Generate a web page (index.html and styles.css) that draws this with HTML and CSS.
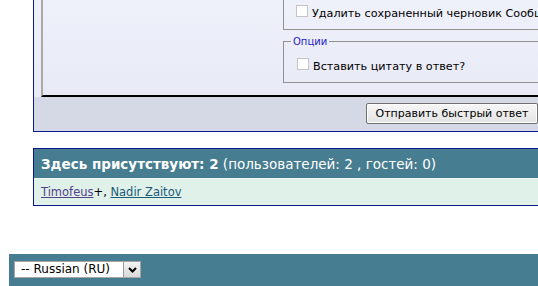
FILE: index.html
```html
<!DOCTYPE html>
<html lang="ru">
<head>
    <meta charset="UTF-8">
    <title>Быстрый ответ</title>
    <link rel="stylesheet" href="styles.css">
</head>
<body>
    <div class="quickreply">
        <div class="qr-main">
            <div class="qr-inner">
                <div class="qr-options">
                    <div class="opt-box opt-cut">
                        <label class="opt-row"><input type="checkbox" class="chk"> Удалить сохраненный черновик Сообщения</label>
                    </div>
                    <fieldset class="opt-box">
                        <legend>Опции</legend>
                        <label class="opt-row"><input type="checkbox" class="chk"> Вставить цитату в ответ?</label>
                    </fieldset>
                </div>
            </div>
        </div>
        <div class="qr-foot">
            <button class="btn">Отправить быстрый ответ</button>
        </div>
    </div>

    <div class="online">
        <div class="online-head">
            <b>Здесь присутствуют: 2</b> (пользователей: 2 , гостей: 0)
        </div>
        <div class="online-body">
            <a href="#" class="visited">Timofeus</a>+, <a href="#">Nadir Zaitov</a>
        </div>
    </div>

    <div class="footbar">
        <div class="lang-select">
            <span class="lang-value">-- Russian (RU)</span>
            <span class="lang-arrow">
                <svg width="9" height="6" viewBox="0 0 9 6"><path d="M1 1 L4.5 4.5 L8 1" fill="none" stroke="#000" stroke-width="2"/></svg>
            </span>
        </div>
    </div>
</body>
</html>
```

FILE: styles.css
```css
html, body {
    overflow: hidden;
}

body {
    margin: 0;
    background: #ffffff;
    font-family: "DejaVu Sans", Verdana, sans-serif;
    font-size: 11px;
    color: #000;
}

.quickreply {
    margin-left: 33px;
    width: 510px;
    border: 1px solid #0b198c;
    border-top: none;
}

.qr-main {
    height: 97px;
    padding-left: 7px;
    background: linear-gradient(#eef0fa, #e8eaf6);
    overflow: hidden;
}

.qr-inner {
    height: 95px;
    border-left: 2px solid #a9a9a9;
    border-bottom: 2px solid #000;
}

.qr-options {
    margin-left: 240px;
    width: 300px;
}

.opt-box {
    border: 1px solid #919191;
    margin: 0;
    padding: 0 0 0 12px;
}

.opt-cut {
    border-top: none;
    height: 29px;
}

fieldset.opt-box {
    margin-top: 5px;
    height: 36px;
    padding-top: 10px;
    padding-left: 13px;
}

legend {
    color: #2424c4;
    font-size: 10px;
    padding: 0 2px;
    margin-left: -6px;
    line-height: 13px;
}

.opt-row {
    display: flex;
    align-items: baseline;
    gap: 4px;
    white-space: nowrap;
    padding-top: 5px;
    font-size: 11.2px;
}

fieldset .opt-row {
    padding-top: 0;
}

.chk {
    appearance: none;
    margin: 0 0 1px 0;
    width: 12px;
    height: 12px;
    border: 1px solid #c4c4c4;
    background: #fff;
}

.qr-foot {
    height: 34px;
    padding: 6px 6px 0 0;
    box-sizing: border-box;
    background: #d5d8e5;
    display: flex;
    justify-content: flex-end;
    align-items: flex-start;
}

.btn {
    width: 172px;
    height: 21px;
    padding: 0;
    font-family: "DejaVu Sans", Verdana, sans-serif;
    font-size: 11px;
    color: #000;
    background: linear-gradient(#f7f7f7, #e3e3e3);
    border: 1px solid #707070;
    border-radius: 2px;
    box-shadow: inset 0 0 0 1px #fff;
}

.online {
    margin: 16px 0 0 33px;
    width: 520px;
    border: 1px solid #0b198c;
}

.online-head {
    height: 29px;
    padding-left: 7px;
    line-height: 31px;
    background: #477d90;
    color: #fff;
    font-size: 13.5px;
    border-bottom: 1px solid #eef6f2;
    white-space: nowrap;
}

.online-body {
    height: 26px;
    padding-left: 7px;
    line-height: 27px;
    font-size: 11.5px;
    background: #e0f1ea;
    white-space: nowrap;
}

.online-body a {
    color: #1a5a78;
}

.online-body a.visited {
    color: #52428a;
}

.footbar {
    margin: 48px 0 0 9px;
    height: 40px;
    background: #477d90;
    padding: 7px 0 0 5px;
    box-sizing: border-box;
}

.lang-select {
    display: flex;
    width: 127px;
    height: 17px;
    box-sizing: border-box;
    border: 1px solid #a5a5a5;
    background: #fff;
}

.lang-value {
    flex: 1;
    padding-left: 6px;
    line-height: 15px;
    font-size: 12px;
    white-space: nowrap;
}

.lang-arrow {
    width: 16px;
    display: flex;
    align-items: center;
    justify-content: center;
    background: linear-gradient(#f4f4f4, #d9d9d9);
    border-left: 1px solid #9a9a9a;
}
```
